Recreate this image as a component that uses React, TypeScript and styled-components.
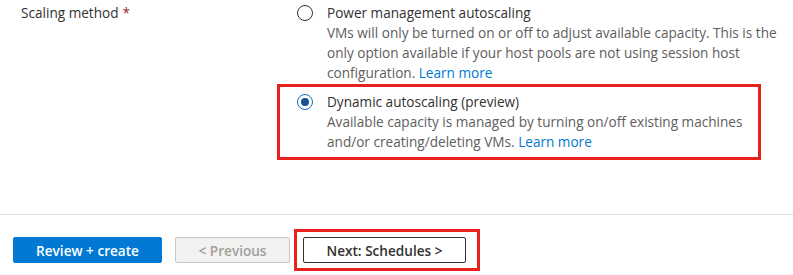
import styled, { createGlobalStyle } from 'styled-components';

const GlobalStyle = createGlobalStyle`
  body {
    margin: 0;
    background: #ffffff;
    font-family: 'Segoe UI', 'Open Sans', 'Noto Sans', sans-serif;
    font-size: 13.6px;
    color: #323130;
  }
`;

const Page = styled.div`
  width: 793px;
  height: 275px;
  display: flex;
  flex-direction: column;
  overflow: hidden;
`;

const Form = styled.div`
  height: 214px;
  box-sizing: border-box;
  padding: 3px 0 0 21px;
  display: flex;
`;

const Label = styled.div`
  width: 276px;
  line-height: 20px;
  color: #323130;
`;

const Required = styled.span`
  color: #a4262c;
  margin-left: 4px;
`;

const OptionList = styled.div`
  width: 464px;
  display: flex;
  flex-direction: column;
  gap: 1px;
`;

const Option = styled.div<{ $highlighted?: boolean }>`
  display: flex;
  gap: 14px;
  ${({ $highlighted }) =>
    $highlighted &&
    `
    margin-left: -20px;
    padding: 5px 0 5px 17px;
    border: 3px solid #e8211d;
  `}
`;

const Radio = styled.span<{ $checked?: boolean }>`
  flex: none;
  width: 16px;
  height: 16px;
  margin-top: 2px;
  box-sizing: border-box;
  border-radius: 50%;
  border: 1px solid ${({ $checked }) => ($checked ? '#0f6cbd' : '#323130')};
  display: flex;
  align-items: center;
  justify-content: center;

  &::after {
    content: '';
    display: ${({ $checked }) => ($checked ? 'block' : 'none')};
    width: 8px;
    height: 8px;
    border-radius: 50%;
    background: #17558e;
  }
`;

const OptionText = styled.div`
  line-height: 20px;
  white-space: nowrap;
`;

const OptionTitle = styled.div`
  color: #323130;
`;

const OptionDescription = styled.div`
  color: #605e5c;
`;

const Link = styled.a`
  color: #0078d4;
  text-decoration: none;
`;

const Footer = styled.div`
  border-top: 1px solid #e1dfdd;
  padding: 22px 0 0 13px;
  display: flex;
  align-items: center;
  gap: 13px;
`;

const Button = styled.button<{ $variant: 'primary' | 'disabled' | 'default' }>`
  height: 26px;
  box-sizing: border-box;
  border-radius: 2px;
  font-family: inherit;
  font-size: 13.6px;
  font-weight: 600;
  padding: 0;
  cursor: pointer;
  ${({ $variant }) =>
    $variant === 'primary'
      ? `
    background: #0078d4;
    border: 1px solid #0078d4;
    color: #ffffff;
    width: 149px;
  `
      : $variant === 'disabled'
      ? `
    background: #f3f2f1;
    border: 1px solid #c8c6c4;
    color: #a19f9d;
    width: 115px;
    cursor: default;
  `
      : `
    background: #ffffff;
    border: 1px solid #323130;
    color: #323130;
    width: 163px;
  `}
`;

const Highlight = styled.span`
  display: flex;
  margin: -8px 0 -8px -9px;
  padding: 5px 11px 5px 6px;
  border: 3px solid #e8211d;
`;

export default function App() {
  return (
    <Page>
      <GlobalStyle />
      <Form>
        <Label>
          Scaling method<Required>*</Required>
        </Label>
        <OptionList>
          <Option>
            <Radio />
            <OptionText>
              <OptionTitle>Power management autoscaling</OptionTitle>
              <OptionDescription>
                VMs will only be turned on or off to adjust available capacity. This is the
                <br />
                only option available if your host pools are not using session host
                <br />
                configuration. <Link href="#">Learn more</Link>
              </OptionDescription>
            </OptionText>
          </Option>
          <Option $highlighted>
            <Radio $checked />
            <OptionText>
              <OptionTitle>Dynamic autoscaling (preview)</OptionTitle>
              <OptionDescription>
                Available capacity is managed by turning on/off existing machines
                <br />
                and/or creating/deleting VMs. <Link href="#">Learn more</Link>
              </OptionDescription>
            </OptionText>
          </Option>
        </OptionList>
      </Form>
      <Footer>
        <Button $variant="primary">Review + create</Button>
        <Button $variant="disabled" disabled>
          &lt; Previous
        </Button>
        <Highlight>
          <Button $variant="default">Next: Schedules &gt;</Button>
        </Highlight>
      </Footer>
    </Page>
  );
}
